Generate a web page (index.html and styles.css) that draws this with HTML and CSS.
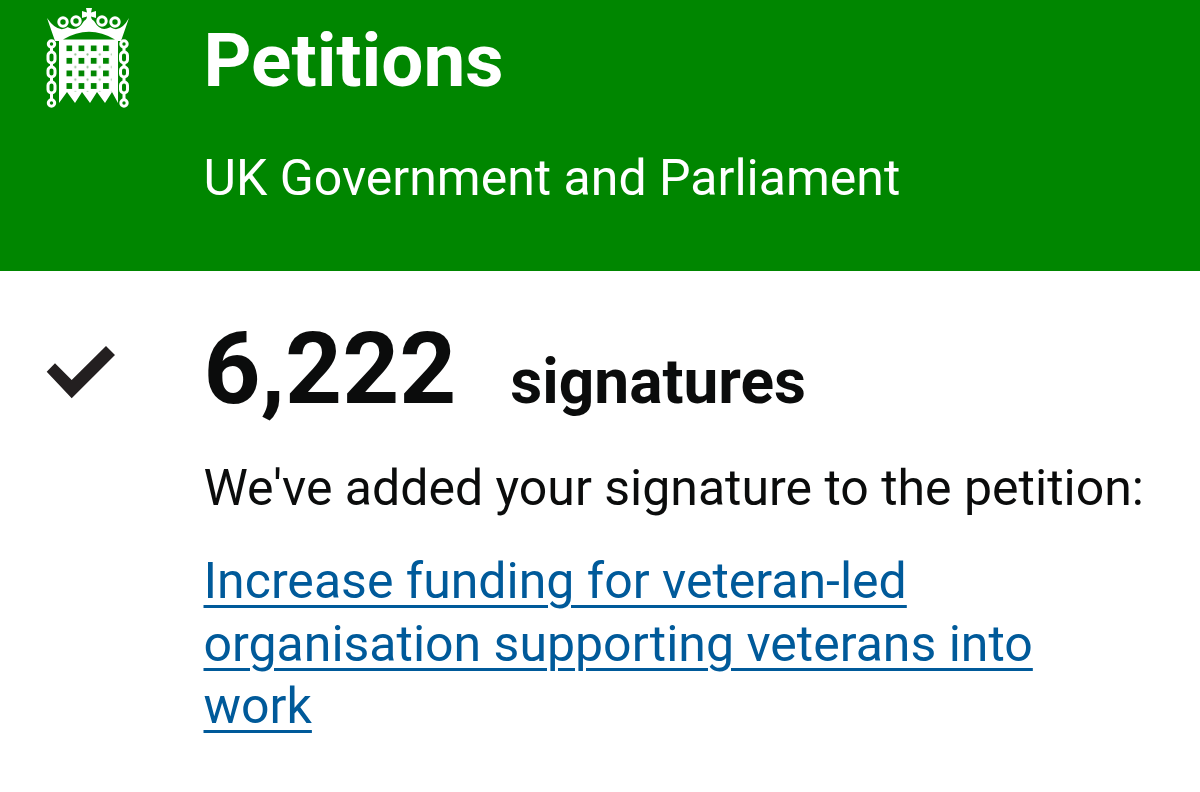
FILE: index.html
```html
<!DOCTYPE html>
<html lang="en">
<head>
<meta charset="utf-8">
<title>Petitions</title>
<link rel="stylesheet" href="styles.css">
</head>
<body>
<header class="banner">
  <div class="icon-col">
    <svg class="logo" viewBox="44 6 88 106" width="88" height="106" aria-hidden="true">
      <defs>
        <pattern id="holes" x="66.3" y="45.3" width="12.25" height="12.6" patternUnits="userSpaceOnUse">
          <rect width="5.8" height="5.8" fill="#008600"/>
          <circle cx="9" cy="9.2" r="1.1" fill="#8fbf8f"/>
        </pattern>
      </defs>
      <!-- crown -->
      <path class="white" d="M55 41 L47 18 Q58 34 68 27 Q77 33 84 21 L89 17 L94 21 Q101 33 110 27 Q120 34 129 18 L121 41 Z"/>
      <path class="green" d="M63 39.5 Q89 24 115 39.5 Z"/>
      <g class="lobes">
        <circle cx="63" cy="22" r="4.2"/>
        <circle cx="76" cy="21" r="4.2"/>
        <circle cx="102" cy="21" r="4.2"/>
        <circle cx="115" cy="22" r="4.2"/>
      </g>
      <circle class="dot" cx="69.5" cy="26" r="1.7"/>
      <circle class="dot" cx="108.5" cy="26" r="1.7"/>
      <path class="white" d="M86 8 H92 L91 12.5 L96 11 V18 L91 16.5 L93 25 H85 L87 16.5 L82 18 V11 L87 12.5 Z"/>
      <!-- portcullis -->
      <path class="white" d="M59 41 H118 V103 L112 92 L105 103 L97 92 L90 103 L82 92 L75 103 L67 92 L59 103 Z"/>
      <rect x="66.3" y="45.3" width="45.5" height="46.5" fill="url(#holes)"/>
      <!-- chains -->
      <g class="chain">
        <circle cx="51.5" cy="44" r="3.2"/>
        <rect x="48" y="52" width="7" height="11" rx="3.5"/>
        <rect x="48" y="67" width="7" height="10" rx="3.5"/>
        <rect x="48" y="82" width="7" height="11" rx="3.5"/>
        <circle cx="51.5" cy="103" r="3.2"/>
        <path d="M51.5 47V52M51.5 63V67M51.5 77V82M51.5 93V100"/>
        <circle cx="124" cy="44" r="3.2"/>
        <rect x="120.5" y="52" width="7" height="11" rx="3.5"/>
        <rect x="120.5" y="67" width="7" height="10" rx="3.5"/>
        <rect x="120.5" y="82" width="7" height="11" rx="3.5"/>
        <circle cx="124" cy="103" r="3.2"/>
        <path d="M124 47V52M124 63V67M124 77V82M124 93V100"/>
      </g>
    </svg>
  </div>
  <div class="banner-text">
    <div class="title">Petitions</div>
    <div class="subtitle">UK Government and Parliament</div>
  </div>
</header>
<main class="confirmation">
  <div class="icon-col">
    <svg class="tick" viewBox="44 343 74 58" width="74" height="58" aria-hidden="true">
      <path d="M46.7 371.7 L55 363.3 L71.7 380 L106 346 L115 355 L71.7 398.3 Z"/>
    </svg>
  </div>
  <div class="details">
    <div class="count"><span class="number">6,222</span><span class="label">signatures</span></div>
    <p class="message">We've added your signature to the petition:</p>
    <a class="petition-link" href="#">Increase funding for veteran-led organisation supporting veterans into work</a>
  </div>
</main>
</body>
</html>
```

FILE: styles.css
```css
* { box-sizing: border-box; }
html, body { margin: 0; padding: 0; }
body {
  width: 1200px;
  height: 792px;
  overflow: hidden;
  background: #fff;
  color: #0b0c0c;
  font-family: Roboto, "Liberation Sans", sans-serif;
}
.banner {
  display: flex;
  height: 271px;
  background: #008600;
  color: #fff;
}
.icon-col { flex: 0 0 203.5px; }
.logo { display: block; margin: 6px 0 0 44px; }
.white { fill: #fff; }
.green { fill: #008600; }
.dot { fill: #008600; }
.lobes { fill: #008600; stroke: #fff; stroke-width: 3; }
.chain { fill: none; stroke: #fff; stroke-width: 3; }
.banner-text { padding-top: 19px; }
.title { font-size: 74.6px; font-weight: 700; line-height: 84px; }
.subtitle { font-size: 50px; line-height: 56px; margin-top: 47px; }
.confirmation { display: flex; }
.tick { display: block; margin: 72px 0 0 44px; }
.tick path { fill: #231f20; }
.details { padding-top: 42px; width: 960px; }
.count { display: flex; align-items: baseline; height: 112px; }
.number { font-size: 99.5px; font-weight: 700; line-height: 112px; }
.label { font-size: 62.2px; font-weight: 700; margin-left: 54px; }
.message { font-size: 50px; line-height: 62px; margin: 32px 0 0; }
.petition-link {
  display: block;
  width: 900px;
  margin-top: 31px;
  font-size: 50px;
  line-height: 62.5px;
  color: #005a9a;
  text-decoration: underline;
  text-decoration-thickness: 3px;
  text-underline-offset: 7px;
}
```
